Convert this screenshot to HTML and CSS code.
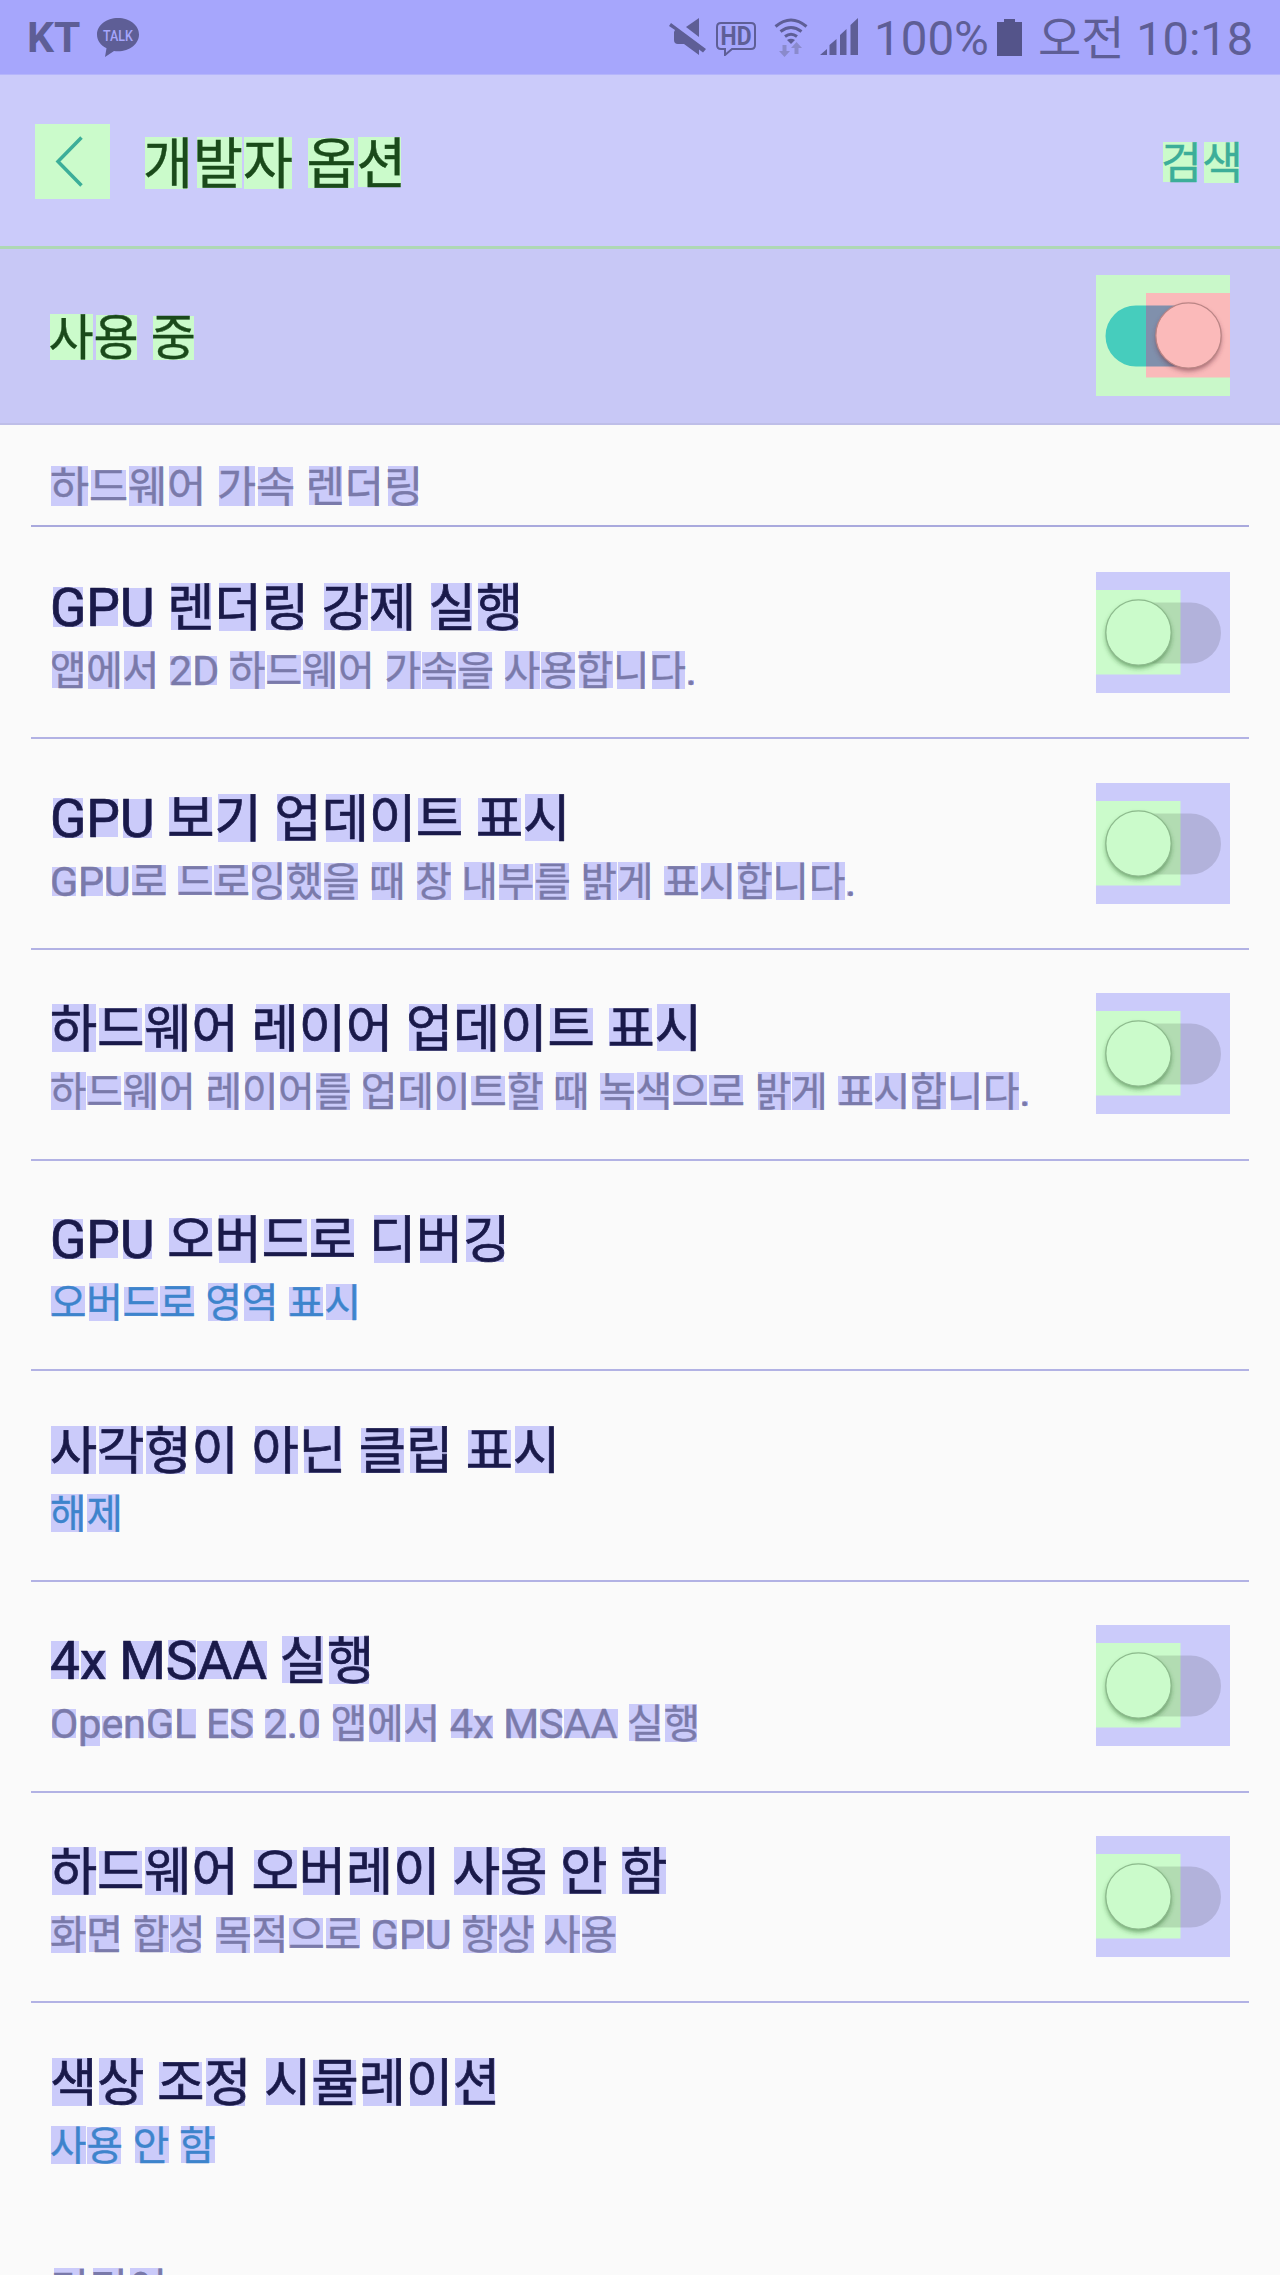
FILE: index.html
```html
<!DOCTYPE html>
<html lang="ko">
<head>
    <meta charset="UTF-8">
    <meta name="viewport" content="width=device-width, initial-scale=1.0">
    <title>개발자 옵션</title>
    <link rel="stylesheet" href="styles.css">
</head>
<body>

    <!-- Switch shapes -->
    <svg class="defs" aria-hidden="true">
        <defs>
            <filter id="thumb-shadow" x="-20%" y="-20%" width="140%" height="140%">
                <feGaussianBlur stdDeviation="2.5"/>
            </filter>
            <symbol id="switch-off" viewBox="0 0 134 121">
                <rect width="134" height="121" fill="#cbcbfa"/>
                <rect y="18" width="84.5" height="84.5" fill="#cbfbcb"/>
                <rect x="9.5" y="30.5" width="115.5" height="61" rx="30.5" fill="#000" fill-opacity=".12"/>
                <circle cx="42.5" cy="63.5" r="32.5" fill="#2c6a2c" fill-opacity=".6" filter="url(#thumb-shadow)"/>
                <circle cx="42.5" cy="60.5" r="32.7" fill="#cbfbcb" stroke="#8dba8d" stroke-width="1.3"/>
            </symbol>
            <symbol id="switch-on" viewBox="0 0 134 121">
                <rect width="134" height="121" fill="#c9f8c9"/>
                <rect x="50" y="18" width="84" height="84.5" fill="#fababa"/>
                <path d="M50 30.5H40a30.5 30.5 0 0 0 0 61h10z" fill="#46cdbd"/>
                <path d="M50 30.5h43v61H50z" fill="#8090ac"/>
                <circle cx="92.5" cy="63.5" r="32.5" fill="#6a3040" fill-opacity=".6" filter="url(#thumb-shadow)"/>
                <circle cx="92.5" cy="60.5" r="32.7" fill="#fbbaba" stroke="#ba8585" stroke-width="1.3"/>
            </symbol>
        </defs>
    </svg>

    <div class="status-bar">
        <span class="carrier">KT</span>
        <svg class="talk" width="42" height="40" viewBox="0 0 42 40">
            <path d="M21 0C9.400 0 0 7.300 0 16.500c0 5.900 3.700 10.900 9.500 13.800L8 39l9-6c1.300.2 2.600.3 4 .3 11.600 0 21-7.400 21-16.800S32.600 0 21 0z"/>
            <text x="21" y="22.500" text-anchor="middle" textLength="30" lengthAdjust="spacingAndGlyphs">TALK</text>
        </svg>
        <div class="status-icons">
            <svg width="37" height="38" viewBox="0 0 37 38">
                <path d="M30 0v19L17 9z"/>
                <path d="M2 5l35 26-3 3.500-4-3V37L15 26H9q-4 0-4-4v-8l1-2L0 8z"/>
            </svg>
            <svg width="40" height="34" viewBox="0 0 40 34" class="hd">
                <path d="M5 1h30q4 0 4 4v18q0 4-4 4H16l-7 6v-6H5q-4 0-4-4V5q0-4 4-4z"/>
                <text x="20" y="22.500" text-anchor="middle" textLength="31" lengthAdjust="spacingAndGlyphs">HD</text>
            </svg>
            <svg width="34" height="39" viewBox="0 0 34 39" class="wifi">
                <path class="arc" d="M1.500 8.500Q17-4.500 32.500 8.500M6.500 13.500q10.500-8 21 0M11 18.500q6-4.500 12 0"/>
                <path d="M13 22q4-2.500 8 0l-4 4z"/>
                <path class="traffic" d="M8.500 27h4v6H16l-5.500 6L5 33h3.500zM20.500 36v-6H17l5.500-6 5.500 6h-3.500v6z"/>
            </svg>
            <svg width="38" height="37" viewBox="0 0 38 37">
                <path d="M0 37l7-6v6zM9.500 37V27l7-6v16zM20 37V17l6.500-6v26zM30.500 37V7L38 0v37z"/>
            </svg>
        </div>
        <span class="status-text percent">100%</span>
        <svg class="battery" width="25" height="37" viewBox="0 0 25 37">
            <path d="M7 0h11v3h7v34H0V3h7z"/>
        </svg>
        <span class="status-text clock">오전 10:18</span>
    </div>

    <header class="app-bar">
        <svg class="back" width="75" height="75" viewBox="0 0 75 75">
            <path d="M46.500 13.500L23 37.500l23.500 24"/>
        </svg>
        <h1 class="glyphs">개발자 옵션</h1>
        <span class="search glyphs">검색</span>
    </header>

    <div class="master">
        <span class="master-label glyphs">사용 중</span>
        <svg class="switch"><use href="#switch-on"/></svg>
    </div>

    <main class="settings">
        <h2 class="section glyphs">하드웨어 가속 렌더링</h2>

        <div class="row">
            <div class="text">
                <div class="title glyphs">GPU 렌더링 강제 실행</div>
                <div class="summary glyphs">앱에서 2D 하드웨어 가속을 사용합니다.</div>
            </div>
            <svg class="switch"><use href="#switch-off"/></svg>
        </div>
        <div class="row">
            <div class="text">
                <div class="title glyphs">GPU 보기 업데이트 표시</div>
                <div class="summary glyphs">GPU로 드로잉했을 때 창 내부를 밝게 표시합니다.</div>
            </div>
            <svg class="switch"><use href="#switch-off"/></svg>
        </div>
        <div class="row">
            <div class="text">
                <div class="title glyphs">하드웨어 레이어 업데이트 표시</div>
                <div class="summary glyphs">하드웨어 레이어를 업데이트할 때 녹색으로 밝게 표시합니다.</div>
            </div>
            <svg class="switch"><use href="#switch-off"/></svg>
        </div>
        <div class="row">
            <div class="text">
                <div class="title glyphs">GPU 오버드로 디버깅</div>
                <div class="summary value glyphs">오버드로 영역 표시</div>
            </div>
        </div>
        <div class="row">
            <div class="text">
                <div class="title glyphs">사각형이 아닌 클립 표시</div>
                <div class="summary value glyphs">해제</div>
            </div>
        </div>
        <div class="row">
            <div class="text">
                <div class="title glyphs">4x MSAA 실행</div>
                <div class="summary glyphs">OpenGL ES 2.0 앱에서 4x MSAA 실행</div>
            </div>
            <svg class="switch"><use href="#switch-off"/></svg>
        </div>
        <div class="row">
            <div class="text">
                <div class="title glyphs">하드웨어 오버레이 사용 안 함</div>
                <div class="summary glyphs">화면 합성 목적으로 GPU 항상 사용</div>
            </div>
            <svg class="switch"><use href="#switch-off"/></svg>
        </div>
        <div class="row last">
            <div class="text">
                <div class="title glyphs">색상 조정 시뮬레이션</div>
                <div class="summary value glyphs">사용 안 함</div>
            </div>
        </div>

        <h2 class="section glyphs">미디어</h2>
    </main>

    <script src="script.js"></script>
</body>
</html>
```

FILE: styles.css
```css
* {
    box-sizing: border-box;
}
body {
    font-family: Roboto, 'Noto Sans CJK KR', sans-serif;
    background-color: #fafafa;
    color: #1a1a4a;
    margin: 0;
    width: 1280px;
    height: 2275px;
    overflow: hidden;
}
h1,
h2 {
    margin: 0;
    font-weight: 400;
}
svg {
    display: block;
    flex: none;
}
.defs {
    width: 0;
    height: 0;
}

/* Status bar */
.status-bar {
    display: flex;
    align-items: flex-start;
    height: 75px;
    padding-left: 27px;
    background-color: #a6a6fc;
    border-bottom: 1px solid #b5b5fb;
    color: #5e5e96;
    fill: #5e5e96;
    white-space: nowrap;
}
.carrier {
    width: 70px;
    font-size: 42.500px;
    font-weight: 700;
    line-height: 75px;
}
.talk {
    margin-top: 18px;
}
.talk text {
    font-size: 15px;
    font-weight: 500;
    fill: #a6a6fc;
}
.status-icons {
    display: flex;
    gap: 12px;
    margin: 18px 0 0 530px;
}
.hd {
    margin: 4px 6px 0 -2px;
}
.hd path {
    fill: none;
    stroke: #5e5e96;
    stroke-width: 2;
}
.hd text {
    font-size: 25px;
    font-weight: 700;
}
.wifi .arc {
    fill: none;
    stroke: #5e5e96;
    stroke-width: 3;
}
.wifi .traffic {
    fill: #8a8acc;
}
.status-text {
    font-size: 47px;
    line-height: 78px;
}
.percent {
    width: 123px;
    margin-left: 16px;
    font-size: 47.500px;
}
.battery {
    margin: 19px 16px 0 0;
    fill: #54548a;
}

/* App bar */
.app-bar {
    display: flex;
    align-items: center;
    height: 174px;
    padding: 1px 37px 0 35px;
    background-color: #cbcbfa;
    border-bottom: 3px solid #aed8b4;
}
.back {
    background-color: #cbfbcb;
}
.back path {
    fill: none;
    stroke: #3cae99;
    stroke-width: 3.5;
}
.app-bar h1 {
    margin-left: 33px;
    padding-top: 7px;
    font-size: 54.300px;
    line-height: 80px;
    color: #1a4a1a;
}
.search {
    margin-left: auto;
    padding-top: 6px;
    font-size: 44.500px;
    line-height: 80px;
    color: #3cae99;
}
.master {
    display: flex;
    align-items: center;
    justify-content: space-between;
    height: 176px;
    padding: 0 50px 2px 48.500px;
    background-color: #c8c8f6;
    border-bottom: 2px solid #bebee8;
}
.master-label {
    padding-top: 7px;
    font-size: 49px;
    line-height: 80px;
    color: #1a4a1a;
}
.app-bar .mark,
.master .mark {
    background-color: #cbfbcb;
}

/* Settings list */
.settings {
    padding: 0 31px;
}
.section {
    height: 102px;
    margin-bottom: 1.800px;
    padding: 33px 19px 0;
    border-bottom: 2.500px solid #a9a9dd;
    font-size: 42.500px;
    line-height: 60px;
    color: #7a7aaa;
}
.row {
    display: flex;
    justify-content: space-between;
    height: 210.670px;
    padding: 43.300px 19px 0;
    border-bottom: 2px solid #b2b2e4;
}
.row.last {
    height: 224px;
    border-bottom: none;
}
.text {
    padding-top: 1px;
}
.title {
    font-size: 51.300px;
    line-height: 72px;
}
.summary {
    font-size: 39.600px;
    line-height: 54px;
    color: #7a7aaa;
}
.summary.value {
    color: #3d84cc;
}
.switch {
    width: 134px;
    height: 121px;
}

/* Overdraw tint behind every glyph, takes no room in the line */
.glyphs {
    white-space: nowrap;
    -webkit-text-stroke: 0.400px;
}
.title.glyphs {
    -webkit-text-stroke: 0.700px;
}
.latin {
    font-size: 1.040em;
    line-height: 1;
}
.mark {
    display: inline-block;
    background-color: #cbcbfa;
}
```

FILE: script.js
```js
const LATIN_SCALE = 1.04;
const context = document.createElement('canvas').getContext('2d');

document.querySelectorAll('.glyphs').forEach(markGlyphs);

function markGlyphs($line) {
    const style = getComputedStyle($line);
    const size = parseFloat(style.fontSize);
    const text = $line.textContent;

    $line.textContent = '';

    for (const char of text) {
        if (char === ' ') {
            $line.append(char);
            continue;
        }

        const isLatin = /[A-Za-z0-9.]/.test(char);

        context.font = `${style.fontWeight} ${isLatin ? size * LATIN_SCALE : size}px ${style.fontFamily}`;
        $line.append(createMark(char));

        if (isLatin) {
            const $latin = document.createElement('span');
            $latin.className = 'latin';
            $latin.textContent = char;
            $line.append($latin);
        } else {
            $line.append(char);
        }
    }
}

function createMark(char) {
    const box = context.measureText(char);
    const left = -box.actualBoundingBoxLeft;
    const right = box.actualBoundingBoxRight;
    const $mark = document.createElement('span');

    $mark.className = 'mark';
    $mark.style.width = `${right - left}px`;
    $mark.style.height = `${box.actualBoundingBoxAscent + box.actualBoundingBoxDescent}px`;
    $mark.style.marginLeft = `${left}px`;
    $mark.style.marginRight = `${-right}px`;
    $mark.style.verticalAlign = `${-box.actualBoundingBoxDescent}px`;

    return $mark;
}
```
